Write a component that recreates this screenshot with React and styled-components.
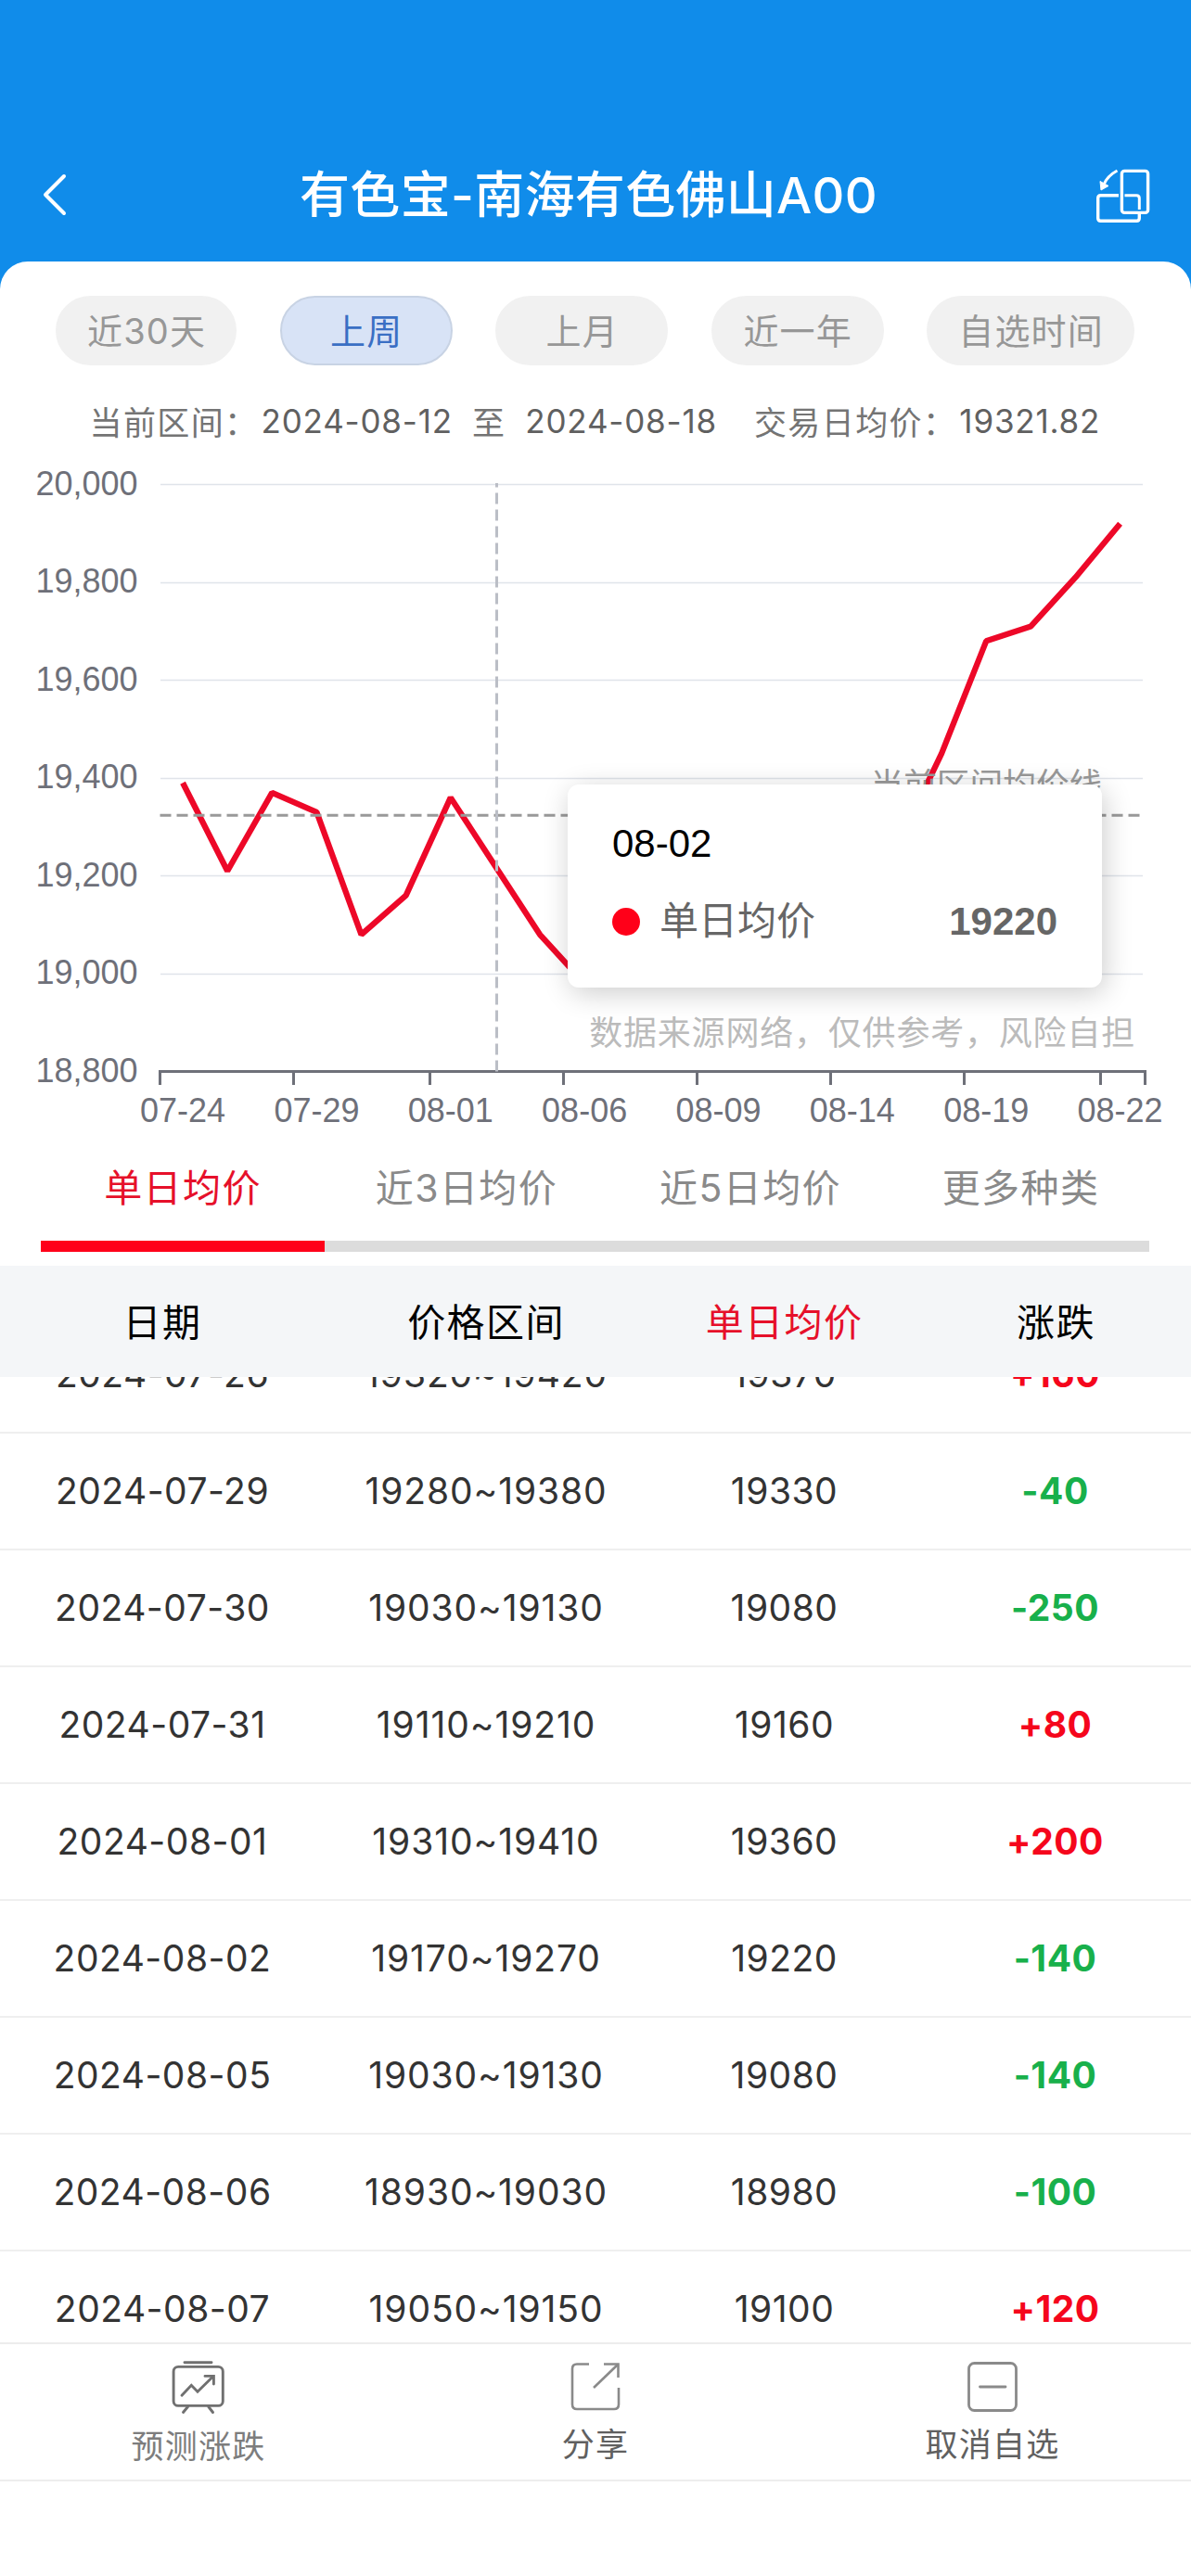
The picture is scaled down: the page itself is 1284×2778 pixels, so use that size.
import React from 'react';
import styled, { createGlobalStyle } from 'styled-components';

const ranges = ['近30天', '上周', '上月', '近一年', '自选时间'];

const tabs = ['单日均价', '近3日均价', '近5日均价', '更多种类'];

const rows = [
    { date: '2024-07-26', range: '19320~19420', price: '19370', change: '+160' },
    { date: '2024-07-29', range: '19280~19380', price: '19330', change: '-40' },
    { date: '2024-07-30', range: '19030~19130', price: '19080', change: '-250' },
    { date: '2024-07-31', range: '19110~19210', price: '19160', change: '+80' },
    { date: '2024-08-01', range: '19310~19410', price: '19360', change: '+200' },
    { date: '2024-08-02', range: '19170~19270', price: '19220', change: '-140' },
    { date: '2024-08-05', range: '19030~19130', price: '19080', change: '-140' },
    { date: '2024-08-06', range: '18930~19030', price: '18980', change: '-100' },
    { date: '2024-08-07', range: '19050~19150', price: '19100', change: '+120' },
];

// one value per trading day, 07-24 to 08-22
const prices = [
    19390, 19210, 19370, 19330, 19080, 19160, 19360, 19220, 19080, 18980, 19100,
    19060, 19120, 19200, 19240, 19220, 19260, 19450, 19680, 19710, 19810, 19920,
];
const average = 19321.82;
const yTicks = [20000, 19800, 19600, 19400, 19200, 19000, 18800];
const xLabels = ['07-24', '07-29', '08-01', '08-06', '08-09', '08-14', '08-19', '08-22'];
const xTicks = [172.5, 316.5, 463.5, 607.5, 751.5, 895.5, 1039.5, 1186.5, 1234.5];

// the svg starts 482px from the top of the page
const yOf = (value) => 673.5 - (value - 18800) * 0.5275;
const xOf = (index) => 173 + 48.12 * (index + 0.5);

const BackIcon = () => (
    <svg width="28" height="48" viewBox="0 0 28 48" fill="none" stroke="#fff" strokeWidth="4" strokeLinecap="round" strokeLinejoin="round">
        <path d="M24 4 L4 24 L24 44" />
    </svg>
);

const RotateIcon = () => (
    <svg width="60" height="60" viewBox="0 0 60 60" fill="none" stroke="#fff" strokeWidth="3.4">
        <rect x="29.4" y="3.4" width="28.2" height="45" rx="3" />
        <path d="M26 29.7 H6.7 Q3.7 29.7 3.7 32.7 V54.3 Q3.7 57.3 6.7 57.3 H45.3 Q48.3 57.3 48.3 54.3 V50" />
        <path d="M32.5 29.7 H45.3 Q48.3 29.7 48.3 32.7 V45" strokeWidth="3" />
        <path d="M24.5 3 Q14 8.5 10 18" strokeWidth="3" />
        <path d="M6 14.5 L7 24 L15 19.5 Z" fill="#fff" strokeWidth="1" />
    </svg>
);

const PredictIcon = () => (
    <svg width="58" height="58" viewBox="0 0 58 58" fill="none" stroke="#707070" strokeWidth="2.9" strokeLinecap="round">
        <path d="M14 1.7 H43" />
        <rect x="2.1" y="6.4" width="53.2" height="42" rx="5" />
        <path d="M11 37.3 L21.3 26.3 L28 33.3 L44.5 17" />
        <path d="M36 16.4 H45.4 V25" />
        <path d="M17.5 49.5 L12.5 55.5 M39.8 49.5 L44.5 55.5" />
    </svg>
);

const ShareIcon = () => (
    <svg width="54" height="54" viewBox="0 0 54 54" fill="none" stroke="#8a8a8a" strokeWidth="2.6">
        <path d="M20 2.5 H7 Q2 2.5 2 7.5 V46 Q2 51 7 51 H47 Q52 51 52 46 V28" />
        <path d="M25 28 L51 3" />
        <path d="M36 2.5 H51.5 V17" />
    </svg>
);

const RemoveIcon = () => (
    <svg width="54" height="54" viewBox="0 0 54 54" fill="none" stroke="#8a8a8a" strokeWidth="2.8" strokeLinecap="round">
        <rect x="1.5" y="1.5" width="51" height="51" rx="6" />
        <path d="M13.5 27 H41" />
    </svg>
);

const PriceChart = () => (
    <ChartBox>
        <svg width="1284" height="748" viewBox="0 0 1284 748">
            {yTicks.slice(0, 6).map((tick) => (
                <line key={tick} x1="173" x2="1232" y1={Math.floor(yOf(tick)) + 0.5} y2={Math.floor(yOf(tick)) + 0.5} stroke="#e0e4ea" strokeWidth="1.4" />
            ))}
            {yTicks.map((tick) => (
                <AxisText key={tick} x="148.5" y={yOf(tick) + 11} textAnchor="end">{tick.toLocaleString('en-US')}</AxisText>
            ))}
            <path d="M171 673.5 H1236" stroke="#6e7079" strokeWidth="3" />
            {xTicks.map((x) => (
                <line key={x} x1={x} x2={x} y1="673" y2="688" stroke="#6e7079" strokeWidth="3" />
            ))}
            {xLabels.map((label, i) => (
                <AxisText key={label} x={xOf(i * 3)} y="728" textAnchor="middle">{label}</AxisText>
            ))}
            <polyline
                points={prices.map((price, i) => `${xOf(i)},${yOf(price)}`).join(' ')}
                fill="none" stroke="#ed0828" strokeWidth="6.3" strokeLinejoin="bevel"
            />
            <line x1="172.5" x2="1232" y1={yOf(average) - 1} y2={yOf(average) - 1} stroke="#999" strokeWidth="3" strokeDasharray="12 6" />
            <MarkText x="938.5" y="377">当前区间均价线</MarkText>
            <line x1="535.5" x2="535.5" y1="673.5" y2="39" stroke="#bbbec6" strokeWidth="3" strokeDasharray="12 6" />
        </svg>
        <Disclaimer>数据来源网络，仅供参考，风险自担</Disclaimer>
        <Tooltip>
            <TooltipTitle>08-02</TooltipTitle>
            <TooltipRow>
                <Dot />
                <span>单日均价</span>
                <TooltipValue>19220</TooltipValue>
            </TooltipRow>
        </Tooltip>
    </ChartBox>
);

const App = () => (
    <Page>
        <GlobalStyle />
        <Header>
            <BackIcon />
            <Title>有色宝-南海有色佛山A00</Title>
            <RotateIcon />
        </Header>
        <Card>
            <RangeBar>
                {ranges.map((range) => (
                    <Pill key={range} $active={range === '上周'}>{range}</Pill>
                ))}
            </RangeBar>
            <Summary>
                <span>当前区间：</span>
                <SummaryValue>2024-08-12</SummaryValue>
                <To>至</To>
                <SummaryValue>2024-08-18</SummaryValue>
                <AverageLabel>交易日均价：</AverageLabel>
                <SummaryValue>19321.82</SummaryValue>
            </Summary>
            <PriceChart />
            <Tabs>
                {tabs.map((tab, i) => (
                    <Tab key={tab} $active={i === 0}>{tab}</Tab>
                ))}
            </Tabs>
            <TableHead>
                <span>日期</span>
                <span>价格区间</span>
                <HeadActive>单日均价</HeadActive>
                <span>涨跌</span>
            </TableHead>
            <TableBody>
                {rows.map((row) => (
                    <Row key={row.date}>
                        <span>{row.date}</span>
                        <PriceRange>{row.range}</PriceRange>
                        <span>{row.price}</span>
                        <Change $up={row.change[0] === '+'}>{row.change}</Change>
                    </Row>
                ))}
            </TableBody>
            <Actions>
                <Action $light>
                    <PredictIcon />
                    <span>预测涨跌</span>
                </Action>
                <Action>
                    <ShareIcon />
                    <span>分享</span>
                </Action>
                <Action>
                    <RemoveIcon />
                    <span>取消自选</span>
                </Action>
            </Actions>
        </Card>
    </Page>
);

export default App;

const GlobalStyle = createGlobalStyle`
    * {
        box-sizing: border-box;
    }
    body {
        margin: 0;
        background: #108cea;
        font-family: Inter, "Noto Sans CJK SC", sans-serif;
    }
`;

const Page = styled.div`
    display: flex;
    flex-direction: column;
    width: 1284px;
    height: 2778px;
    background: #108cea;
    overflow: hidden;
`;

const Header = styled.header`
    display: flex;
    align-items: flex-end;
    justify-content: space-between;
    height: 282px;
    padding: 0 44px 41px 45px;
    svg:first-child {
        margin-bottom: 7px;
    }
`;

const Title = styled.div`
    margin: 0 0 -10px 16px;
    color: #fff;
    font-size: 54px;
    font-weight: 500;
    line-height: 80px;
    letter-spacing: 0.3px;
    white-space: nowrap;
`;

const Card = styled.main`
    display: flex;
    flex-direction: column;
    flex: 1;
    background: #fff;
    border-radius: 30px 30px 0 0;
`;

const RangeBar = styled.div`
    display: flex;
    justify-content: center;
    gap: 46.5px;
    padding: 37px 1px 0 0;
`;

const Pill = styled.button`
    min-width: 186px;
    height: 75px;
    padding: 0 31px 4px 32px;
    border: 2px solid ${props => props.$active ? '#c8d3e4' : '#f1f1f1'};
    border-radius: 38px;
    background: ${props => props.$active ? '#d8e3f6' : '#f1f1f1'};
    color: ${props => props.$active ? '#3a6fc4' : '#979797'};
    font-family: inherit;
    font-size: 38px;
    letter-spacing: 1.2px;
    white-space: nowrap;
`;

const Summary = styled.div`
    display: flex;
    align-items: center;
    height: 88px;
    padding: 31px 0 0 96.5px;
    color: #747474;
    font-size: 35px;
    letter-spacing: 1.4px;
    white-space: nowrap;
`;

const SummaryValue = styled.span`
    margin-left: 3px;
    color: #606060;
    letter-spacing: 0.8px;
`;

const To = styled.span`
    margin: 0 18px 0 21px;
`;

const AverageLabel = styled.span`
    margin-left: 40px;
`;

const ChartBox = styled.section`
    position: relative;
    height: 748px;
    svg {
        display: block;
    }
`;

const AxisText = styled.text`
    fill: #6e7079;
    font-family: "Liberation Sans", sans-serif;
    font-size: 36px;
`;

const MarkText = styled.text`
    fill: #999;
    font-family: "Noto Sans CJK SC", sans-serif;
    font-size: 35.7px;
`;

const Disclaimer = styled.div`
    position: absolute;
    right: 60px;
    bottom: 89px;
    color: #bbb;
    font-size: 36px;
    line-height: 54px;
    letter-spacing: 0.8px;
`;

const Tooltip = styled.div`
    position: absolute;
    left: 612px;
    top: 364px;
    width: 576px;
    height: 219px;
    padding: 36px 48px;
    border-radius: 12px;
    background: #fff;
    box-shadow: 3px 6px 30px rgba(0, 0, 0, 0.2);
    color: #666;
    font-family: "Liberation Sans", "Noto Sans CJK SC", sans-serif;
    font-size: 42px;
`;

const TooltipTitle = styled.div`
    color: #000;
    line-height: 56px;
`;

const TooltipRow = styled.div`
    display: flex;
    align-items: center;
    gap: 21px;
    margin-top: 26px;
    line-height: 60px;
`;

const Dot = styled.i`
    width: 30px;
    height: 30px;
    border-radius: 50%;
    background: #ff0019;
`;

const TooltipValue = styled.b`
    margin-left: auto;
`;

const Tabs = styled.nav`
    display: grid;
    grid-template-columns: 306px 306px 306px 277px;
    width: 1195px;
    height: 135px;
    margin: 0 0 0 44px;
`;

const Tab = styled.div`
    height: 120px;
    border-bottom: 12px solid ${props => props.$active ? '#ff0019' : '#dcdcdc'};
    color: ${props => props.$active ? '#e6102a' : '#8a8a8a'};
    font-size: 41px;
    line-height: 102px;
    letter-spacing: 1.4px;
    text-align: center;
`;

const TableHead = styled.div`
    display: grid;
    grid-template-columns: 350px 348px 295px 291px;
    align-items: center;
    height: 120px;
    padding-bottom: 4px;
    background: #f4f6f8;
    color: #000;
    font-size: 41px;
    letter-spacing: 1.4px;
    text-align: center;
`;

const HeadActive = styled.span`
    color: #e6102a;
`;

const TableBody = styled.div`
    height: 1041px;
    overflow: hidden;
`;

const Row = styled.div`
    display: grid;
    grid-template-columns: 350px 348px 295px 291px;
    align-items: center;
    height: 126px;
    padding-bottom: 1px;
    border-bottom: 2px solid #efefef;
    color: #333;
    font-size: 39px;
    letter-spacing: 0.5px;
    text-align: center;
    &:first-child {
        margin-top: -65px;
    }
`;

const PriceRange = styled.span`
    letter-spacing: 0.9px;
`;

const Change = styled.span`
    padding-right: 2px;
    color: ${props => props.$up ? '#f5061c' : '#18b04b'};
    font-weight: 700;
`;

const Actions = styled.footer`
    display: grid;
    grid-template-columns: repeat(3, 1fr);
    height: 150px;
    border-top: 2px solid #ededed;
    border-bottom: 2px solid #ededed;
`;

const Action = styled.div`
    display: flex;
    flex-direction: column;
    align-items: center;
    gap: ${props => props.$light ? 7 : 8}px;
    padding-top: ${props => props.$light ? 18 : 19}px;
    color: ${props => props.$light ? '#7d7d7d' : '#606060'};
    font-size: 35px;
    line-height: 54px;
    letter-spacing: 1.2px;
`;
